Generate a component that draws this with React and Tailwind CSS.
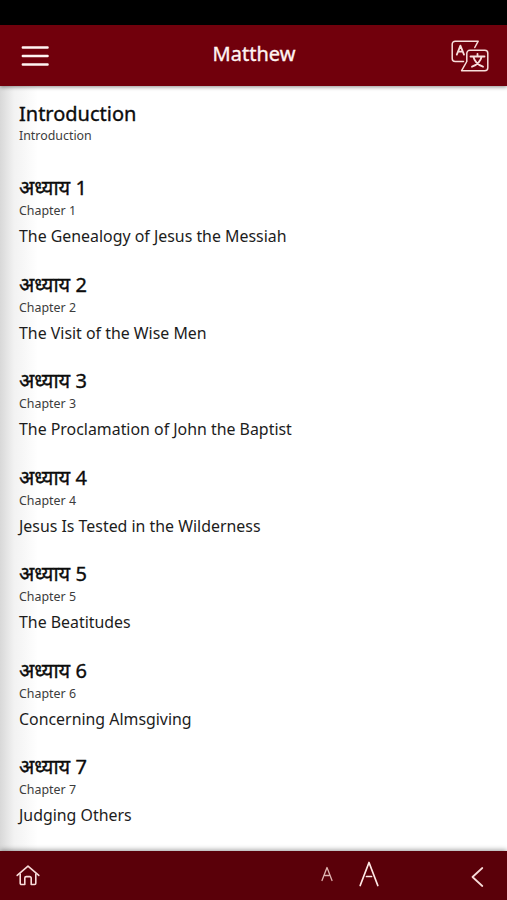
const chapters = [
  { number: 1, summary: "The Genealogy of Jesus the Messiah" },
  { number: 2, summary: "The Visit of the Wise Men" },
  { number: 3, summary: "The Proclamation of John the Baptist" },
  { number: 4, summary: "Jesus Is Tested in the Wilderness" },
  { number: 5, summary: "The Beatitudes" },
  { number: 6, summary: "Concerning Almsgiving" },
  { number: 7, summary: "Judging Others" },
];

function MenuIcon() {
  return (
    <svg width="28" height="22" viewBox="0 0 28 22" stroke="#fff4f2" strokeWidth="2.4" strokeLinecap="round">
      <path d="M1.8 2.5h24.800M1.8 11h24.800M1.8 19.500h24.800" />
    </svg>
  );
}

function TranslateIcon() {
  return (
    <svg width="38" height="32" viewBox="0 0 38 32" fill="none" stroke="#f8dfdc" strokeWidth="1.5" strokeLinecap="round" strokeLinejoin="round">
      <path d="M12.5 21.5H4.2a3 3 0 0 1-3-3V4.2a3 3 0 0 1 3-3h23l-3.4 6.3" />
      <path d="M15.8 21.5V13.3a3 3 0 0 1 3-3h15a3 3 0 0 1 3 3v14.4a3 3 0 0 1-3 3H10.6l5.2-9.2" />
      <path strokeWidth="1.8" d="M5.8 14.6L9.4 5.700l3.600 8.900M7.200 11.700h4.400" />
      <path strokeWidth="1.8" d="M19.5 16.500h14M26.500 13.800v2.700M22.300 16.500c1.200 5 4.800 8.500 9.700 10.200M30.700 16.500c-1.200 5-4.800 8.500-9.700 10.200" />
    </svg>
  );
}

function HomeIcon() {
  return (
    <svg width="24" height="21" viewBox="0 0 24 21" fill="none" stroke="#f8dcda" strokeWidth="1.6" strokeLinecap="round" strokeLinejoin="round">
      <path d="M1.2 10.4L12 1.200l10.800 9.200" />
      <path d="M4.2 9v9.300a1.200 1.200 0 0 0 1.200 1.200h3.400v-6.400a1.500 1.500 0 0 1 1.500-1.500h3.400a1.500 1.500 0 0 1 1.500 1.500v6.400h3.400a1.200 1.200 0 0 0 1.200-1.200V9" />
    </svg>
  );
}

function ChapterItem({ number, summary }) {
  return (
    <li className="h-[96.5px]">
      <h2 className="text-[20px] leading-7 text-[#0c0c0c] [-webkit-text-stroke:0.35px]">अध्याय {number}</h2>
      <p className="pt-px text-[12.4px] leading-4 text-[#3c3c3c]">Chapter {number}</p>
      <p className="mt-[5px] text-[15.9px] leading-6 text-[#1c1c1c]">{summary}</p>
    </li>
  );
}

export default function App() {
  return (
    <div className="flex h-[900px] w-[507px] flex-col overflow-hidden bg-white font-['Noto_Sans',sans-serif]">
      <div className="h-[25px] shrink-0 bg-black" />

      <header className="z-10 grid h-[61px] shrink-0 grid-cols-[1fr_auto_1fr] items-center bg-[#71000c] pr-[18px] pl-[21px] shadow-[0_1px_4px_rgba(0,0,0,0.45)]">
        <button aria-label="Menu" className="justify-self-start">
          <MenuIcon />
        </button>
        <h1 className="pr-0.5 pb-1 text-[20px] leading-7 text-[#fff4f2] [-webkit-text-stroke:0.35px]">Matthew</h1>
        <button aria-label="Language" className="justify-self-end">
          <TranslateIcon />
        </button>
      </header>

      <main className="min-h-0 flex-1 overflow-hidden bg-linear-to-r from-[#d8d8d8] via-[#f2f2f2] via-[14px] to-white to-[38px] pt-[14px] pl-[19px]">
        <div className="h-[74px]">
          <h2 className="text-[20px] leading-7 text-[#0c0c0c] [-webkit-text-stroke:0.35px]">Introduction</h2>
          <p className="text-[12.4px] leading-4 text-[#3c3c3c]">Introduction</p>
        </div>
        <ul>
          {chapters.map((c) => (
            <ChapterItem key={c.number} number={c.number} summary={c.summary} />
          ))}
        </ul>
      </main>

      <footer className="z-10 flex h-[49px] shrink-0 items-center bg-[#5a0009] pr-[23px] pl-4 shadow-[0_-1px_5px_rgba(0,0,0,0.4)]">
        <button aria-label="Home">
          <HomeIcon />
        </button>
        <button aria-label="Smaller text" className="ml-[281px] pb-1">
          <svg width="12" height="16" viewBox="0 0 12 16" fill="none" stroke="#dfb4b1" strokeWidth="1.3" strokeLinecap="round" strokeLinejoin="round">
            <path d="M1 14.500L6 1.500l5 13M4 9.500h4" />
          </svg>
        </button>
        <button aria-label="Larger text" className="ml-[26px] pb-1">
          <svg width="20" height="26" viewBox="0 0 20 26" fill="none" stroke="#ffe9e6" strokeWidth="1.7" strokeLinecap="round" strokeLinejoin="round">
            <path d="M1.2 24.500L10 1.500l8.800 23M7.500 15.500h5" />
          </svg>
        </button>
        <button aria-label="Back" className="ml-auto pt-0.5">
          <svg width="13" height="20" viewBox="0 0 13 20" fill="none" stroke="#f8dcda" strokeWidth="1.7" strokeLinecap="round" strokeLinejoin="round">
            <path d="M11.3 1L1.500 10l9.800 9" />
          </svg>
        </button>
      </footer>
    </div>
  );
}
